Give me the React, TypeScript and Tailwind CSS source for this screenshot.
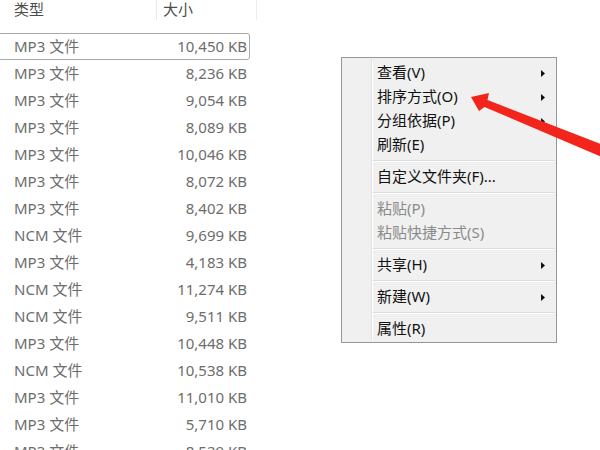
import React from 'react';

const rows: [string, string][] = [
  ['MP3 文件', '10,450 KB'],
  ['MP3 文件', '8,236 KB'],
  ['MP3 文件', '9,054 KB'],
  ['MP3 文件', '8,089 KB'],
  ['MP3 文件', '10,046 KB'],
  ['MP3 文件', '8,072 KB'],
  ['MP3 文件', '8,402 KB'],
  ['NCM 文件', '9,699 KB'],
  ['MP3 文件', '4,183 KB'],
  ['NCM 文件', '11,274 KB'],
  ['NCM 文件', '9,511 KB'],
  ['MP3 文件', '10,448 KB'],
  ['NCM 文件', '10,538 KB'],
  ['MP3 文件', '11,010 KB'],
  ['MP3 文件', '5,710 KB'],
  ['MP3 文件', '8,529 KB'],
];

type MenuEntry =
  | { kind: 'item'; label: string; sub?: boolean; disabled?: boolean }
  | { kind: 'sep' };

const menu: MenuEntry[] = [
  { kind: 'item', label: '查看(V)', sub: true },
  { kind: 'item', label: '排序方式(O)', sub: true },
  { kind: 'item', label: '分组依据(P)', sub: true },
  { kind: 'item', label: '刷新(E)' },
  { kind: 'sep' },
  { kind: 'item', label: '自定义文件夹(F)...' },
  { kind: 'sep' },
  { kind: 'item', label: '粘贴(P)', disabled: true },
  { kind: 'item', label: '粘贴快捷方式(S)', disabled: true },
  { kind: 'sep' },
  { kind: 'item', label: '共享(H)', sub: true },
  { kind: 'sep' },
  { kind: 'item', label: '新建(W)', sub: true },
  { kind: 'sep' },
  { kind: 'item', label: '属性(R)' },
];

function SubArrow() {
  return (
    <svg width="4" height="7" viewBox="0 0 4 7" className="block">
      <polygon points="0,0 4,3.5 0,7" fill="#111" />
    </svg>
  );
}

function ContextMenu() {
  return (
    <div className="absolute left-[341px] top-[57px] w-[216px] h-[286px] border border-[#979797] bg-[#f0f0f0] flex pt-[3px] pb-[1px]">
      {/* Icon gutter */}
      <div className="w-[30px] -mt-[2px] border-r border-[#e2e3e3]"></div>
      <div className="flex-1 flex flex-col border-l border-white">
        {menu.map((m, i) =>
          m.kind === 'sep' ? (
            <div key={i} className="h-[8px] pt-[3px] pr-[2px]">
              <div className="h-px bg-[#dadada]"></div>
              <div className="h-px bg-white"></div>
            </div>
          ) : (
            <div key={i} className="h-[24px] flex items-center pl-[4px] pr-[11px]">
              <span
                className={`flex-1 text-[15px] leading-[20px] pb-[3px] ${m.disabled ? 'text-[#8a8a8a]' : 'text-[#111]'}`}
              >
                {m.label}
              </span>
              {m.sub && <SubArrow />}
            </div>
          )
        )}
      </div>
    </div>
  );
}

export default function App() {
  return (
    <div
      className="relative w-[600px] h-[450px] overflow-hidden bg-white"
      style={{ fontFamily: '"Noto Sans", "Noto Sans CJK SC", sans-serif' }}
    >
      {/* File list */}
      <div className="w-[257px]">
        <div className="flex h-[20px] text-[15px] leading-[18px] text-[#4d4d4d]">
          <div className="w-[157px] pl-[14px] border-r border-[#e8e8e8]">类型</div>
          <div className="w-[100px] pl-[6px] border-r border-[#ececec]">大小</div>
        </div>
        <div className="mt-[13px]">
          {rows.map(([type, size], i) => (
            <div
              key={i}
              className={`flex h-[27px] items-center w-[252px] -ml-[2px] text-[15px] leading-[20px] pb-[2px] text-[#6d6d6d] ${
                i === 0 ? 'border border-[#a9a9a9] rounded-[3px]' : 'border border-transparent'
              }`}
            >
              <span className="w-[157px] pl-[15px]">{type}</span>
              <span className="flex-1 text-right pr-[2px]">{size}</span>
            </div>
          ))}
        </div>
      </div>

      <ContextMenu />

      {/* Red annotation arrow */}
      <svg className="absolute inset-0 pointer-events-none" width="600" height="450" viewBox="0 0 600 450">
        <polygon
          points="471,97 489,93 487.5,100 606,146 602,157 484.5,107 479,111"
          fill="#f2241b"
        />
      </svg>
    </div>
  );
}
